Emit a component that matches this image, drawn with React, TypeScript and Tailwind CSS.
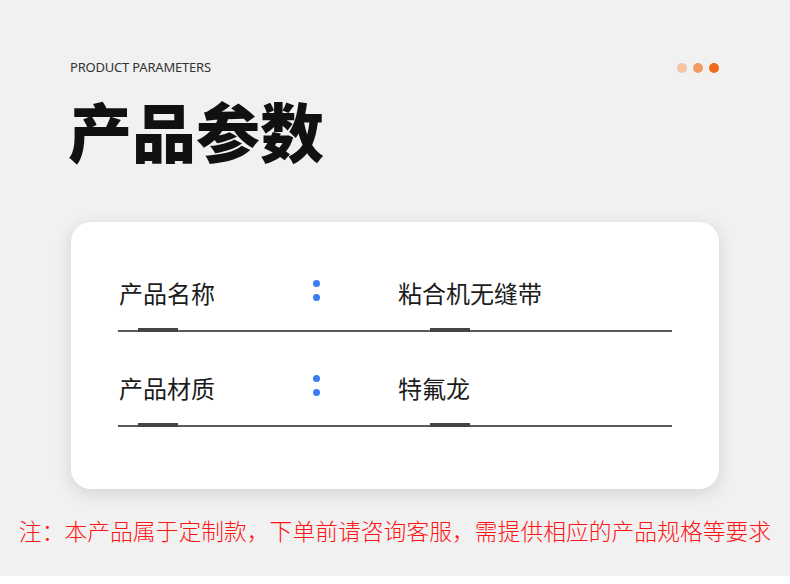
const params = [
  { label: "产品名称", value: "粘合机无缝带" },
  { label: "产品材质", value: "特氟龙" },
];

const cjk = "font-['Noto_Sans_CJK_SC','Noto_Sans',sans-serif]";

// one row of the parameter table
const ParamRow = ({ label, value, first }: { label: string; value: string; first: boolean }) => {
  return (
    <div className={first ? "" : "mt-[40px]"}>
      <div className={`flex items-center h-[32px] text-[24px] leading-[32px] text-[#1c1c1c] ${cjk}`}>
        <span className="w-[195px] pl-[1px]">{label}</span>
        <div className="w-[7px] flex flex-col gap-[7px] mb-[6px]">
          <span className="w-[7px] h-[7px] rounded-full bg-[#3a7df0]" />
          <span className="w-[7px] h-[7px] rounded-full bg-[#3a7df0]" />
        </div>
        <span className="pl-[78px]">{value}</span>
      </div>
      {/* underline with two thicker marks */}
      <div className="mt-[19px] flex items-end h-[4px] w-[554px]">
        <div className="w-[20px] h-[2px] bg-[#5a5a5a]" />
        <div className="w-[40px] h-[4px] bg-[#444]" />
        <div className="w-[252px] h-[2px] bg-[#5a5a5a]" />
        <div className="w-[40px] h-[4px] bg-[#444]" />
        <div className="flex-1 h-[2px] bg-[#5a5a5a]" />
      </div>
    </div>
  );
};

export default function App() {
  return (
    <div className="w-[790px] h-[584px] bg-white flex flex-col overflow-hidden">
      <div className="h-[576px] bg-[#f1f1f1] flex flex-col">
        {/* header */}
        <div className="flex items-center justify-between pl-[70px] pr-[71px] pt-[59px]">
          <span className="font-['Noto_Sans',sans-serif] text-[13px] leading-[16px] text-[#333] tracking-[-0.2px]">
            PRODUCT PARAMETERS
          </span>
          <div className="flex gap-[6px] mt-[2px]">
            <span className="w-[10px] h-[10px] rounded-full bg-[#f5c4a2]" />
            <span className="w-[10px] h-[10px] rounded-full bg-[#f19a62]" />
            <span className="w-[10px] h-[10px] rounded-full bg-[#ef6a1c]" />
          </div>
        </div>
        <h1 className={`pl-[68px] mt-[18px] text-[64px] leading-[72px] font-black text-[#111] ${cjk}`}>
          产品参数
        </h1>

        {/* parameter card */}
        <div className="ml-[71px] mt-[57px] w-[648px] h-[267px] bg-white rounded-[20px] shadow-[0_4px_18px_rgba(0,0,0,0.13)] pl-[47px] pt-[55px]">
          {params.map((p, i) => (
            <ParamRow key={p.label} label={p.label} value={p.value} first={i === 0} />
          ))}
        </div>

        <p className={`mt-[26px] text-center text-[22.8px] leading-[32px] font-light text-[#ff1414] ${cjk}`}>
          注：本产品属于定制款，下单前请咨询客服，需提供相应的产品规格等要求
        </p>
      </div>
    </div>
  );
}
